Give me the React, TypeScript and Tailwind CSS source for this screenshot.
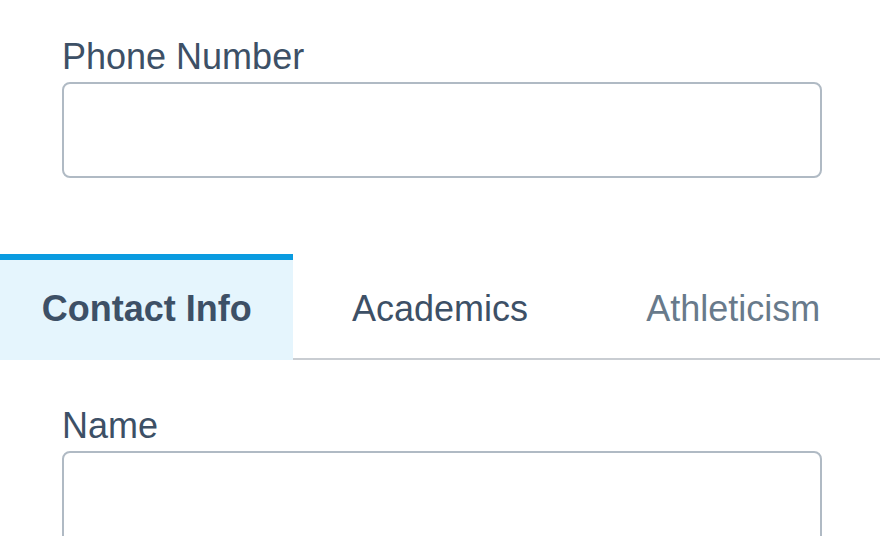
import { useState } from 'react';

const tabs = ['Contact Info', 'Academics', 'Athleticism'];

function Field({ label, className = '' }: { label: string; className?: string }) {
  return (
    <div className={`pl-[62px] pr-[58px] ${className}`}>
      <label className="block text-[36px] leading-[1.2] text-[#3d5066] mb-[4px]">{label}</label>
      <input
        type="text"
        className="block w-full h-[96px] rounded-[8px] border-2 border-[#b0bac4] bg-white px-4 text-[28px] outline-none"
      />
    </div>
  );
}

export default function App() {
  const [active, setActive] = useState(0);

  return (
    <div className="w-[880px] h-[536px] overflow-hidden bg-white font-['Liberation_Sans',Arial,sans-serif]">
      <Field label="Phone Number" className="pt-[35px]" />

      {/* Tabs */}
      <div className="mt-[76px] flex h-[106px]">
        {tabs.map((tab, i) => {
          const isActive = active === i;
          return (
            <button
              key={tab}
              onClick={() => setActive(i)}
              className={`flex-1 flex items-center justify-center border-t-[6px] border-b-2 text-[36px] ${
                isActive
                  ? 'border-t-[#0a9be0] border-b-transparent bg-[#e5f5fd] font-bold text-[#3d5066]'
                  : i === 1
                  ? 'border-t-transparent border-b-[#c9cdd2] text-[#3d5066]'
                  : 'border-t-transparent border-b-[#c9cdd2] text-[#687a8b]'
              }`}
            >
              {tab}
            </button>
          );
        })}
      </div>

      <Field label="Name" className="pt-[44px]" />
    </div>
  );
}
